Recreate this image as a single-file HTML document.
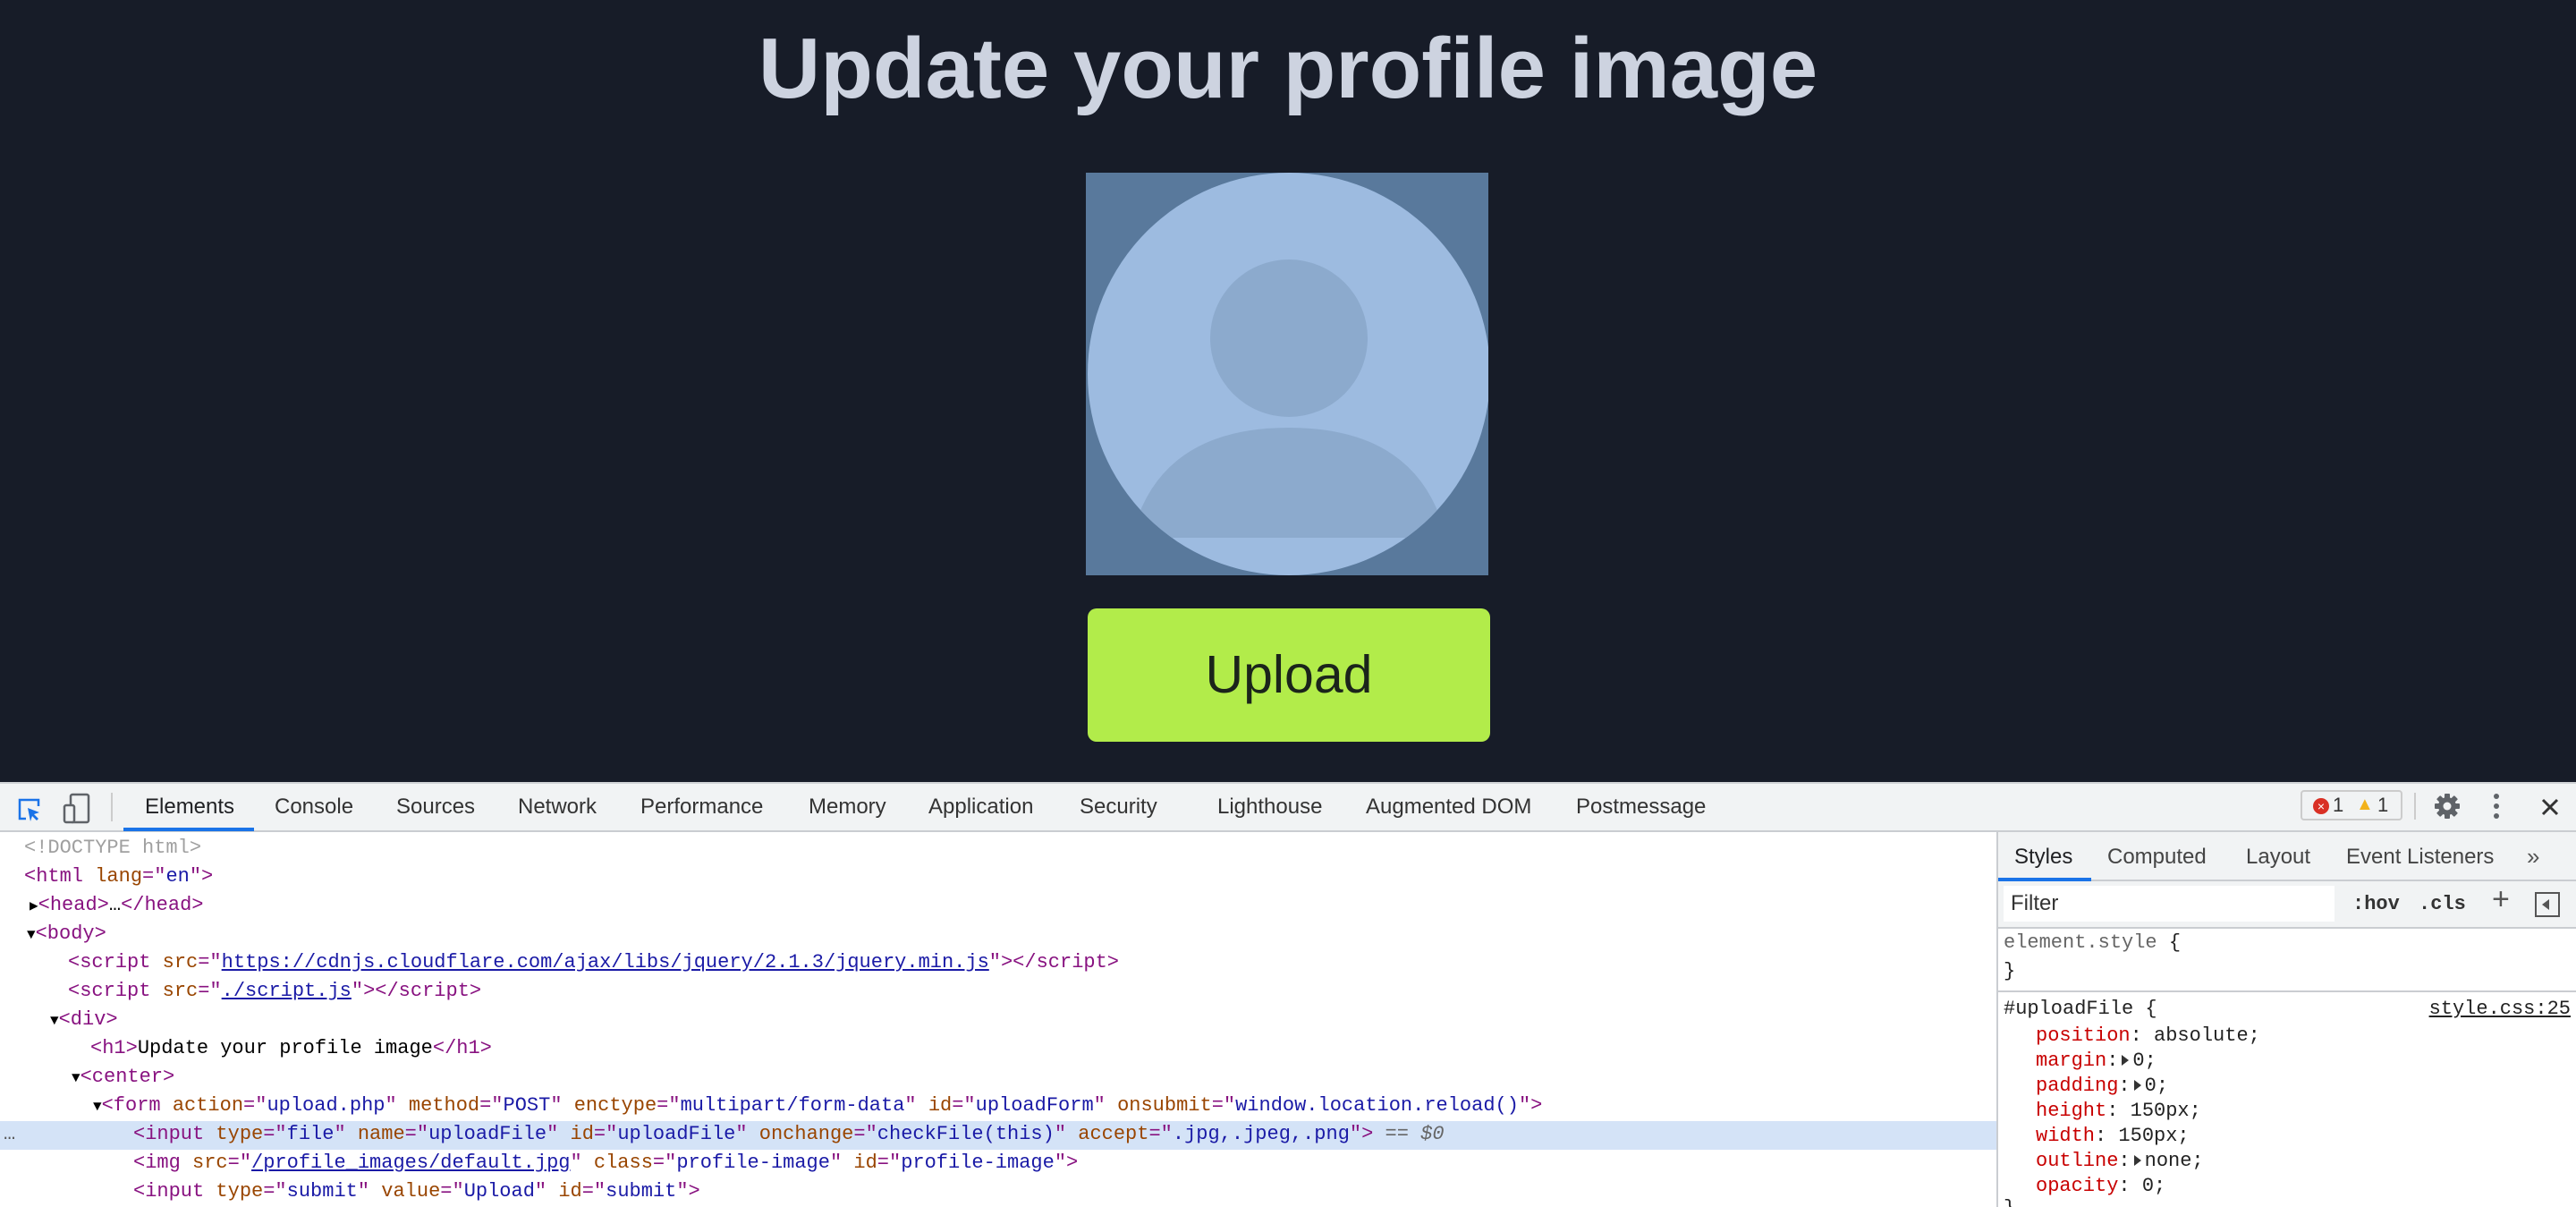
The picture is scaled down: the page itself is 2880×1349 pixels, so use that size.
<!DOCTYPE html>
<html style="width:2880px;height:1349px;overflow:hidden"><head><style>
*{margin:0;padding:0;box-sizing:border-box}
body{width:2880px;height:1349px;background:#171c28;position:relative;overflow:hidden;font-family:"Liberation Sans",Arial,sans-serif}
.a{position:absolute;white-space:pre}
h1{position:absolute;left:0;width:2880px;top:17px;text-align:center;font-size:96px;font-weight:bold;color:#cdd3e0;line-height:120px}
.img{position:absolute;left:1214px;top:193px;width:450px;height:450px;background:#59799c;overflow:hidden}
.btn{position:absolute;left:1216px;top:680px;width:450px;height:149px;background:#b2ec4a;border-radius:10px;text-align:center;line-height:149px;font-size:59px;color:#1b241b}
.tb{position:absolute;left:0;top:874px;width:2880px;height:56px;background:#f1f3f4;border-top:2px solid #d0d3d6;border-bottom:2px solid #cacdd1}
.tab{position:absolute;top:12px;font-size:24px;color:#333}
.el{position:absolute;left:0;top:930px;width:2232px;height:419px;background:#fff;overflow:hidden}
.m{font-family:"Liberation Mono",monospace;font-size:22px;line-height:32px}
.t{color:#881280}.n{color:#994500}.v{color:#1a1aa6}.l{color:#1a1aa6;text-decoration:underline}.g{color:#a0a0a0}
.sp{position:absolute;left:2232px;top:930px;width:648px;height:419px;background:#fff;border-left:2px solid #cacdd1;overflow:hidden}
.p{color:#c80000}
.pl{white-space:normal}
.pl div{height:28px;line-height:28px;white-space:pre}
.tri{display:inline-block;width:0;height:0;border-top:6px solid transparent;border-bottom:6px solid transparent;border-left:8px solid #333;margin:0 4px 0 4px;vertical-align:middle}
</style></head><body>
<h1>Update your profile image</h1>
<div class="img"><svg width="450" height="450" viewBox="0 0 450 450">
<circle cx="227" cy="225" r="225" fill="#9dbbe0"/>
<clipPath id="c"><circle cx="227" cy="225" r="225"/></clipPath>
<ellipse cx="227" cy="185" rx="88" ry="88" fill="#8caacd"/>
<path d="M58 385 Q95 285 227 285 Q359 285 396 385 L396 408 L58 408Z" fill="#8caacd" clip-path="url(#c)"/>
</svg></div>
<div class="btn">Upload</div>

<div class="tb">
<svg class="a" style="left:18px;top:14px" width="30" height="30" viewBox="0 0 30 30"><path d="M11 25H4V4h21v7" fill="none" stroke="#1a73e8" stroke-width="2.5"/><path d="M13 13l13 5-6 2 5 5-2 2-5-5-2 6z" fill="#1a73e8"/></svg>
<svg class="a" style="left:70px;top:10px" width="32" height="36" viewBox="0 0 32 36"><rect x="9" y="2" width="20" height="31" rx="2" fill="none" stroke="#5f6368" stroke-width="2.5"/><rect x="2" y="14" width="11" height="19" rx="2" fill="#f1f3f4" stroke="#5f6368" stroke-width="2.5"/></svg>
<div class="a" style="left:124px;top:10px;width:2px;height:32px;background:#ccc"></div>
<div class="tab" style="left:162px;color:#202124">Elements</div>
<div class="a" style="left:138px;top:49px;width:146px;height:4px;background:#1a73e8"></div>
<div class="tab" style="left:307px">Console</div>
<div class="tab" style="left:443px">Sources</div>
<div class="tab" style="left:579px">Network</div>
<div class="tab" style="left:716px">Performance</div>
<div class="tab" style="left:904px">Memory</div>
<div class="tab" style="left:1038px">Application</div>
<div class="tab" style="left:1207px">Security</div>
<div class="tab" style="left:1361px">Lighthouse</div>
<div class="tab" style="left:1527px">Augmented DOM</div>
<div class="tab" style="left:1762px">Postmessage</div>
<div class="a" style="left:2572px;top:7px;width:114px;height:34px;border:2px solid #ccc;border-radius:4px;font-size:22px;line-height:30px;color:#333"><span style="position:absolute;left:12px;top:7px;width:18px;height:18px;border-radius:50%;background:#d93025;color:#fff;font-size:14px;line-height:18px;text-align:center">×</span><span style="position:absolute;left:34px">1</span><span style="position:absolute;left:60px;top:-1px;color:#f2b21b;font-size:20px">▲</span><span style="position:absolute;left:84px">1</span></div>
<div class="a" style="left:2699px;top:10px;width:2px;height:30px;background:#ccc"></div>
<svg class="a" style="left:2721px;top:10px" width="30" height="30" viewBox="0 0 30 30"><g fill="#5f6368"><circle cx="15" cy="15" r="10"/><rect x="12" y="1" width="6" height="28" rx="1"/><rect x="1" y="12" width="28" height="6" rx="1"/><rect x="12" y="1" width="6" height="28" rx="1" transform="rotate(45 15 15)"/><rect x="12" y="1" width="6" height="28" rx="1" transform="rotate(-45 15 15)"/></g><circle cx="15" cy="15" r="4.5" fill="#f1f3f4"/></svg>
<div class="a" style="left:2788px;top:11px;width:6px"><div style="width:6px;height:6px;border-radius:3px;background:#5f6368;margin-bottom:5px"></div><div style="width:6px;height:6px;border-radius:3px;background:#5f6368;margin-bottom:5px"></div><div style="width:6px;height:6px;border-radius:3px;background:#5f6368"></div></div>
<svg class="a" style="left:2841px;top:16px" width="20" height="20" viewBox="0 0 20 20"><path d="M2 2L18 18M18 2L2 18" stroke="#333" stroke-width="3"/></svg>
</div>

<div class="el m">
<div class="a" style="left:0;top:323px;width:2232px;height:32px;background:#d4e3f7"></div>
<div class="a g" style="left:27px;top:2px">&lt;!DOCTYPE html&gt;</div>
<div class="a" style="left:27px;top:34px"><span class="t">&lt;html </span><span class="n">lang</span><span class="t">="</span><span class="v">en</span><span class="t">"&gt;</span></div>
<div class="a" style="left:33px;top:66px"><span style="font-size:16px">▶</span><span class="t">&lt;head&gt;</span>…<span class="t">&lt;/head&gt;</span></div>
<div class="a" style="left:30px;top:98px"><span style="font-size:16px">▼</span><span class="t">&lt;body&gt;</span></div>
<div class="a" style="left:76px;top:130px"><span class="t">&lt;script </span><span class="n">src</span><span class="t">="</span><span class="l">https://cdnjs.cloudflare.com/ajax/libs/jquery/2.1.3/jquery.min.js</span><span class="t">"&gt;&lt;/script&gt;</span></div>
<div class="a" style="left:76px;top:162px"><span class="t">&lt;script </span><span class="n">src</span><span class="t">="</span><span class="l">./script.js</span><span class="t">"&gt;&lt;/script&gt;</span></div>
<div class="a" style="left:56px;top:194px"><span style="font-size:16px">▼</span><span class="t">&lt;div&gt;</span></div>
<div class="a" style="left:101px;top:226px"><span class="t">&lt;h1&gt;</span>Update your profile image<span class="t">&lt;/h1&gt;</span></div>
<div class="a" style="left:80px;top:258px"><span style="font-size:16px">▼</span><span class="t">&lt;center&gt;</span></div>
<div class="a" style="left:104px;top:290px"><span style="font-size:16px">▼</span><span class="t">&lt;form </span><span class="n">action</span><span class="t">="</span><span class="v">upload.php</span><span class="t">" </span><span class="n">method</span><span class="t">="</span><span class="v">POST</span><span class="t">" </span><span class="n">enctype</span><span class="t">="</span><span class="v">multipart/form-data</span><span class="t">" </span><span class="n">id</span><span class="t">="</span><span class="v">uploadForm</span><span class="t">" </span><span class="n">onsubmit</span><span class="t">="</span><span class="v">window.location.reload()</span><span class="t">"&gt;</span></div>
<div class="a" style="left:4px;top:322px;color:#555">…</div>
<div class="a" style="left:149px;top:322px"><span class="t">&lt;input </span><span class="n">type</span><span class="t">="</span><span class="v">file</span><span class="t">" </span><span class="n">name</span><span class="t">="</span><span class="v">uploadFile</span><span class="t">" </span><span class="n">id</span><span class="t">="</span><span class="v">uploadFile</span><span class="t">" </span><span class="n">onchange</span><span class="t">="</span><span class="v">checkFile(this)</span><span class="t">" </span><span class="n">accept</span><span class="t">="</span><span class="v">.jpg,.jpeg,.png</span><span class="t">"&gt;</span><span style="color:#666"> == <i>$0</i></span></div>
<div class="a" style="left:149px;top:354px"><span class="t">&lt;img </span><span class="n">src</span><span class="t">="</span><span class="l">/profile_images/default.jpg</span><span class="t">" </span><span class="n">class</span><span class="t">="</span><span class="v">profile-image</span><span class="t">" </span><span class="n">id</span><span class="t">="</span><span class="v">profile-image</span><span class="t">"&gt;</span></div>
<div class="a" style="left:149px;top:386px"><span class="t">&lt;input </span><span class="n">type</span><span class="t">="</span><span class="v">submit</span><span class="t">" </span><span class="n">value</span><span class="t">="</span><span class="v">Upload</span><span class="t">" </span><span class="n">id</span><span class="t">="</span><span class="v">submit</span><span class="t">"&gt;</span></div>
</div>

<div class="sp">
<div class="a" style="left:0;top:0;width:648px;height:55px;background:#f1f3f4;border-bottom:2px solid #cacdd1"></div>
<div class="a" style="left:18px;top:14px;font-size:24px;color:#202124">Styles</div>
<div class="a" style="left:0;top:51px;width:104px;height:4px;background:#1a73e8"></div>
<div class="a" style="left:122px;top:14px;font-size:24px;color:#444">Computed</div>
<div class="a" style="left:277px;top:14px;font-size:24px;color:#444">Layout</div>
<div class="a" style="left:389px;top:14px;font-size:24px;color:#444">Event Listeners</div>
<div class="a" style="left:591px;top:12px;font-size:26px;color:#555">»</div>
<div class="a" style="left:0;top:55px;width:648px;height:53px;background:#f1f3f4;border-bottom:2px solid #cacdd1"></div>
<div class="a" style="left:6px;top:60px;width:370px;height:40px;background:#fff;font-size:24px;line-height:40px;padding-left:8px;color:#333">Filter</div>
<div class="a m" style="left:396px;top:65px;font-weight:bold;color:#333">:hov</div>
<div class="a m" style="left:470px;top:65px;font-weight:bold;color:#333">.cls</div>
<div class="a" style="left:552px;top:56px;font-size:34px;color:#555">+</div>
<div class="a" style="left:600px;top:67px;width:28px;height:28px;border:2px solid #555"><div style="position:absolute;left:6px;top:6px;width:0;height:0;border-top:6px solid transparent;border-bottom:6px solid transparent;border-right:8px solid #555"></div></div>
<div class="a m" style="left:6px;top:108px;color:#666">element.style <span style="color:#222">{</span></div>
<div class="a m" style="left:6px;top:140px;color:#222">}</div>
<div class="a" style="left:0;top:177px;width:648px;height:2px;background:#cacdd1"></div>
<div class="a m" style="left:6px;top:182px;color:#222">#uploadFile {</div>
<div class="a m" style="right:6px;top:182px;color:#222;text-decoration:underline">style.css:25</div>
<div class="a m pl" style="left:42px;top:214px;color:#222"><div><span class="p">position</span>: absolute;</div><div><span class="p">margin</span>:<span class="tri"></span>0;</div><div><span class="p">padding</span>:<span class="tri"></span>0;</div><div><span class="p">height</span>: 150px;</div><div><span class="p">width</span>: 150px;</div><div><span class="p">outline</span>:<span class="tri"></span>none;</div><div><span class="p">opacity</span>: 0;</div></div>
<div class="a m" style="left:6px;top:405px;color:#222">}</div>
</div>
</body></html>
